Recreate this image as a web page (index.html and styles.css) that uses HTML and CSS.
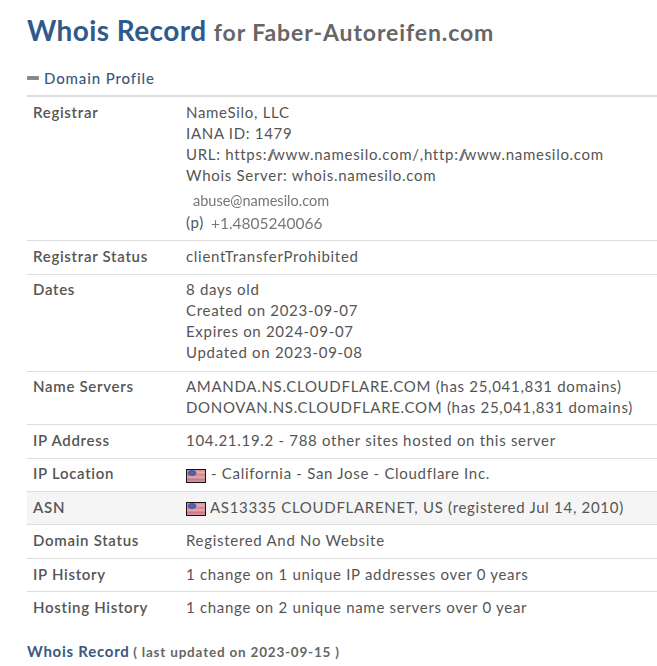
FILE: index.html
```html
<!DOCTYPE html>
<html lang="en">
<head>
<meta charset="utf-8">
<title>Whois Record for Faber-Autoreifen.com</title>
<link rel="stylesheet" href="styles.css">
</head>
<body>
<main class="page">
  <h1 class="title"><span class="title-main">Whois Record</span> <span class="title-sub">for Faber-Autoreifen.com</span></h1>
  <h2 class="section"><span class="dash"></span>Domain Profile</h2>
  <div class="table">
    <div class="row">
      <div class="label">Registrar</div>
      <div class="value">
        <div>NameSilo, LLC</div>
        <div>IANA ID: 1479</div>
        <div>URL: https:<span class="slash">//</span>www.namesilo.com/,http:<span class="slash">//</span>www.namesilo.com</div>
        <div>Whois Server: whois.namesilo.com</div>
        <div class="email">abuse@namesilo.com</div>
        <div class="phone-line"><span>(p)</span><span class="phone">+1.4805240066</span></div>
      </div>
    </div>
    <div class="row"><div class="label">Registrar Status</div><div class="value">clientTransferProhibited</div></div>
    <div class="row row-dates">
      <div class="label">Dates</div>
      <div class="value">
        <div>8 days old</div>
        <div>Created on 2023-09-07</div>
        <div>Expires on 2024-09-07</div>
        <div>Updated on 2023-09-08</div>
      </div>
    </div>
    <div class="row row-servers">
      <div class="label">Name Servers</div>
      <div class="value">
        <div>AMANDA.NS.CLOUDFLARE.COM (has 25,041,831 domains)</div>
        <div>DONOVAN.NS.CLOUDFLARE.COM (has 25,041,831 domains)</div>
      </div>
    </div>
    <div class="row"><div class="label">IP Address</div><div class="value">104.21.19.2 - 788 other sites hosted on this server</div></div>
    <div class="row row-location">
      <div class="label">IP Location</div>
      <div class="value flag-line">
        <span class="flag flag-low"></span>
        <span class="place">- California - San Jose - Cloudflare Inc.</span>
      </div>
    </div>
    <div class="row row-alt">
      <div class="label">ASN</div>
      <div class="value flag-line">
        <span class="flag"></span>
        <span>AS13335 CLOUDFLARENET, US (registered Jul 14, 2010)</span>
      </div>
    </div>
    <div class="row"><div class="label">Domain Status</div><div class="value">Registered And No Website</div></div>
    <div class="row"><div class="label">IP History</div><div class="value">1 change on 1 unique IP addresses over 0 years</div></div>
    <div class="row row-last"><div class="label">Hosting History</div><div class="value">1 change on 2 unique name servers over 0 year</div></div>
  </div>
  <h2 class="record"><span class="record-main">Whois Record</span> <span class="record-sub">( last updated on 2023-09-15 )</span></h2>
</main>
</body>
</html>
```
FILE: styles.css
```css
* { box-sizing: border-box; }
html, body { margin: 0; padding: 0; background: #fff; }
body { font-family: Lato, "Liberation Sans", sans-serif; color: #555; font-size: 15px; overflow: hidden; height: 666px; }
.page { padding: 0 0 0 27px; }
.title { margin: 0; padding-top: 12px; line-height: 34px; font-weight: 700; }
.title-main { font-size: 28px; color: #305a8a; letter-spacing: .4px; }
.title-sub { font-size: 23px; color: #666; letter-spacing: .9px; }
.section { margin: 18px 0 0; font-size: 15px; font-weight: 500; line-height: 22px; color: #38597f; letter-spacing: .87px; display: flex; align-items: center; padding-bottom: 6px; border-bottom: 2px solid #ddd; }
.dash { width: 12px; height: 4px; background: #888; border-radius: 1px; margin-right: 5px; }
.row { display: flex; padding: 5px 6px 6.4px; border-bottom: 1px solid #ddd; line-height: 21px; letter-spacing: .7px; }
.row-dates { padding-top: 4.4px; padding-bottom: 7.6px; }
.row-servers { padding-top: 4.4px; padding-bottom: 6.1px; }
.row-location { padding-top: 4.4px; padding-bottom: 7px; }
.row-alt { background: #f5f5f5; }
.row-last { border-bottom: 0; }
.label { width: 153px; flex: none; color: #555; font-weight: 600; }
.value { color: #555; }
.slash { letter-spacing: -2.2px; }
.email { color: #777; font-size: 14.5px; letter-spacing: 0; padding-left: 7px; margin-top: 4px; filter: blur(.3px); }
.phone-line { display: flex; gap: 7px; line-height: 23px; }
.phone { color: #777; font-size: 15.5px; line-height: 22px; letter-spacing: 0; margin-top: 1px; filter: blur(.3px); }
.flag-line { display: flex; align-items: center; gap: 4px; }
.flag {
  width: 20px; height: 14px; flex: none; margin-top: 2px; border: 1px solid #141414;
  background:
    radial-gradient(ellipse 5px 3.5px at 5px 3px, #5c6cb4 0, #46559f 70%, transparent 100%),
    linear-gradient(180deg, #d58b98 0, #e7aeb6 22%, #cf7f8e 42%, #e6acb4 60%, #c97786 78%, #d99aa4 100%);
}
.flag-low { margin-top: 4px; }
.place { margin-left: 1px; }
.record { margin: 15px 0 0; font-size: 15px; line-height: 22px; }
.record-main { color: #38597f; font-weight: 700; letter-spacing: .75px; }
.record-sub { color: #666; font-size: 13.5px; font-weight: 700; letter-spacing: .8px; }
```
